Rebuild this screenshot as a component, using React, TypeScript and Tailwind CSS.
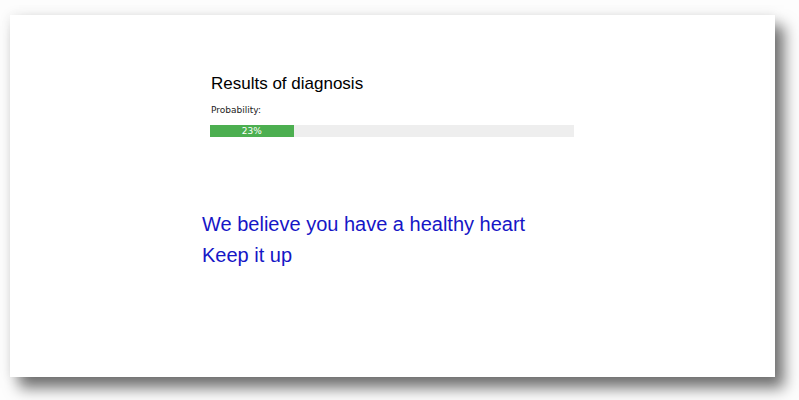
export default function App() {
  const probability = 23;

  return (
    <div className="min-h-screen w-[799px] h-[400px] overflow-hidden bg-[#fdfdfd] pt-[15px] pl-[10px]">
      {/* Result card */}
      <div className="w-[765px] h-[362px] bg-white shadow-[0_0_12px_rgba(0,0,0,0.08),9px_11px_14px_rgba(0,0,0,0.55)]">
        <div className="pl-[200px] pt-[58px] font-['Liberation_Sans',Arial,sans-serif]">
          <h2 className="pl-px text-[17px] leading-[22px] text-black">Results of diagnosis</h2>
          <p className="pl-px mt-[9px] text-[9px] leading-[12px] text-[#222] font-['DejaVu_Sans',sans-serif]">
            Probability:
          </p>
          <div className="mt-[9px] w-[364px] h-[12px] bg-[#eeeeee]">
            <div
              className="h-full bg-[#4caf50] text-white text-[9px] leading-[12px] text-center font-['DejaVu_Sans',sans-serif]"
              style={{ width: `${probability}%` }}
            >
              {probability}%
            </div>
          </div>
        </div>

        <div className="pl-[192px] mt-[72px] text-[20px] leading-[31px] text-[#1616c6] font-['Liberation_Sans',Arial,sans-serif]">
          <p>We believe you have a healthy heart</p>
          <p>Keep it up</p>
        </div>
      </div>
    </div>
  );
}
